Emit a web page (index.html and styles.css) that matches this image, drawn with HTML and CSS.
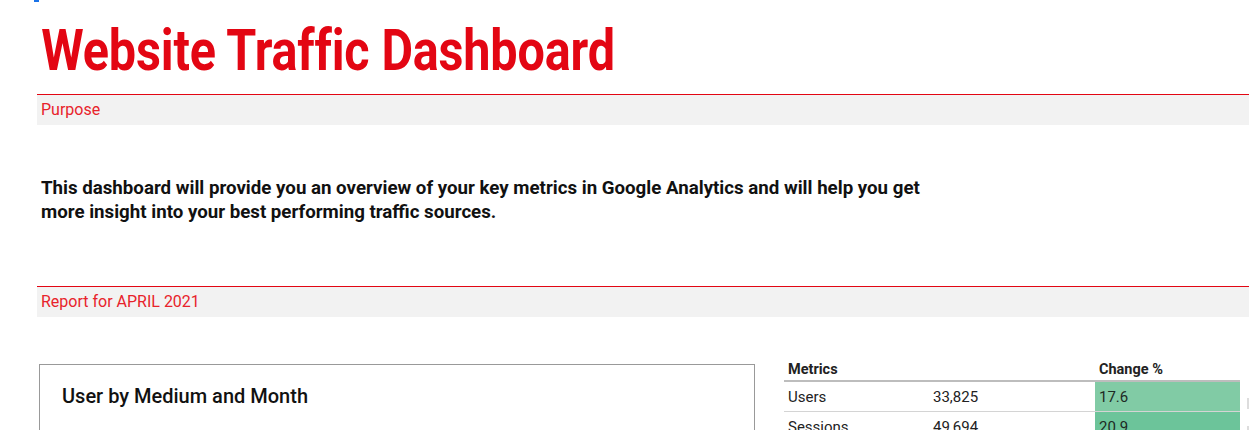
FILE: index.html
```html
<!DOCTYPE html>
<html>
<head>
<meta charset="utf-8">
<link rel="stylesheet" href="styles.css">
</head>
<body>
<div class="page">
  <div class="topmark"></div>
  <h1 class="title">Website Traffic Dashboard</h1>
  <div class="band">Purpose</div>
  <div class="intro">
    <p>This dashboard will provide you an overview of your key metrics in Google Analytics and will help you get more insight into your best performing traffic sources.</p>
  </div>
  <div class="band">Report for APRIL 2021</div>
  <div class="content">
    <div class="card">
      <h2 class="card-title">User by Medium and Month</h2>
    </div>
    <div class="table-wrap">
      <table class="metrics">
        <thead>
          <tr><th class="c-name">Metrics</th><th class="c-val"></th><th class="c-chg">Change %</th></tr>
        </thead>
        <tbody>
          <tr><td>Users</td><td>33,825</td><td class="chg chg-1">17.6</td></tr>
          <tr><td>Sessions</td><td>49,694</td><td class="chg chg-2">20.9</td></tr>
        </tbody>
      </table>
      <div class="scroll">
        <span class="tick"></span>
        <span class="tick tick2"></span>
      </div>
    </div>
  </div>
</div>
</body>
</html>
```

FILE: styles.css
```css
* { box-sizing: border-box; }
html, body { margin: 0; padding: 0; background: #fff; }
body {
  font-family: Roboto, "Liberation Sans", Arial, sans-serif;
  width: 1249px;
  height: 430px;
  overflow: hidden;
}
.page { padding-left: 37px; }
.topmark {
  width: 5px;
  height: 2px;
  background: #1a73e8;
  margin-left: -3px;
}
.title {
  margin: 0;
  height: 92px;
  padding: 12px 0 0 5px;
  font-weight: 700;
  font-size: 58px;
  line-height: 72px;
  color: #e30613;
  transform: scaleX(0.837);
  transform-origin: left top;
  white-space: nowrap;
  letter-spacing: -0.2px;
}
.band {
  border-top: 1px solid #e30613;
  background: #f2f2f2;
  height: 31px;
  padding: 5px 0 0 4px;
  font-size: 16px;
  line-height: 20px;
  color: #e8232b;
}
.intro {
  height: 161px;
  padding: 51px 0 0 4px;
}
.intro p {
  margin: 0;
  width: 895px;
  font-size: 18.7px;
  font-weight: 700;
  line-height: 24px;
  color: #111;
}
.content {
  display: flex;
  align-items: flex-start;
  padding-top: 47px;
}
.card {
  margin-left: 2px;
  width: 717px;
  height: 120px;
  border: 1px solid #999;
  padding: 17px 0 0 22px;
}
.card-title {
  margin: 0;
  font-size: 20px;
  font-weight: 500;
  line-height: 28px;
  color: #111;
}
.table-wrap {
  margin-left: 29px;
  margin-top: -6px;
  display: flex;
}
.metrics {
  width: 456px;
  border-collapse: collapse;
  font-size: 15px;
  color: #222;
}
.metrics th {
  text-align: left;
  font-weight: 700;
  font-size: 14.5px;
  height: 23px;
  padding: 3px 4px 0;
  border-bottom: 2px solid #bdbdbd;
  vertical-align: top;
}
.c-name { width: 145px; }
.c-val { width: 166px; }
.c-chg { width: 145px; }
.metrics td {
  height: 30px;
  padding: 2px 4px 0;
  border-bottom: 1px solid #d4d4d4;
  vertical-align: middle;
}
.metrics td.chg { padding-left: 4px; color: #1e2a24; }
.chg-1 { background: #81cba5; }
.chg-2 { background: #6cc49a; }
.scroll {
  width: 9px;
  position: relative;
}
.tick {
  position: absolute;
  left: 7px;
  top: 40px;
  width: 2px;
  height: 11px;
  background: #ddd;
}
.tick2 { top: 68px; }
```
